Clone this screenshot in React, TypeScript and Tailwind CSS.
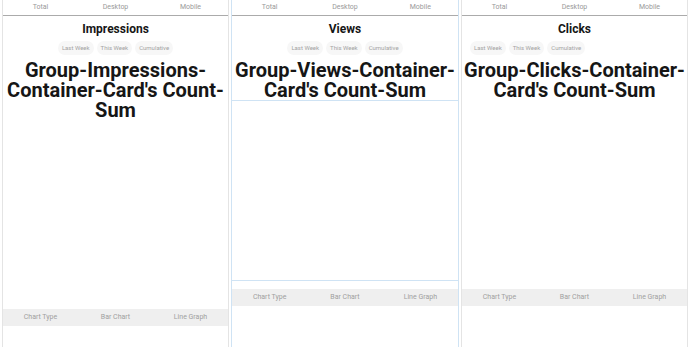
import React from "react";

type Card = {
  title: string;
  count: string;
  frame: string;
  chart: string;
  pills: string;
};

const cards: Card[] = [
  {
    title: "Impressions",
    count: "Group-Impressions-Container-Card's Count-Sum",
    frame: "w-[227px] border-x border-[#e4e4e4]",
    chart: "",
    pills: "justify-center",
  },
  {
    title: "Views",
    count: "Group-Views-Container-Card's Count-Sum",
    frame: "w-[228px] border-x border-[#cfe3f4]",
    chart: "border-y border-[#cfe3f4]",
    pills: "justify-center",
  },
  {
    title: "Clicks",
    count: "Group-Clicks-Container-Card's Count-Sum",
    frame: "w-[227px] border-x border-[#e4e4e4]",
    chart: "",
    pills: "justify-start pl-[8px]",
  },
];

const tabs = ["Total", "Desktop", "Mobile"];
const ranges = ["Last Week", "This Week", "Cumulative"];
const chartTypes = ["Chart Type", "Bar Chart", "Line Graph"];

function CountCard({ card }: { card: Card }) {
  return (
    <div className={`flex flex-col h-full bg-white ${card.frame}`}>
      <div className="grid grid-cols-3 h-[16px] border-b border-[#ababab] text-[7px] leading-[14px] text-[#9a9a9a]">
        {tabs.map((t) => (
          <div key={t} className="text-center">
            {t}
          </div>
        ))}
      </div>

      <h2 className="mt-[5px] text-center text-[12px] leading-[16px] font-bold text-[#161616]">
        {card.title}
      </h2>

      <div className={`mt-[4px] flex gap-[3px] ${card.pills}`}>
        {ranges.map((r) => (
          <span
            key={r}
            className="h-[14px] px-[4px] rounded-full bg-[#f7f7f7] text-[6px] leading-[14px] text-[#a3a3a3]"
          >
            {r}
          </span>
        ))}
      </div>

      <div className="mt-[5px] text-center text-[20px] leading-[20px] font-bold text-[#161616]">
        {card.count}
      </div>

      <div className={`h-[181px] ${card.chart}`} />

      <div className="mt-[8px] grid grid-cols-3 h-[17px] bg-[#efefef] text-[7px] leading-[17px] text-[#a0a0a0]">
        {chartTypes.map((c) => (
          <div key={c} className="text-center">
            {c}
          </div>
        ))}
      </div>
    </div>
  );
}

export default function App() {
  return (
    <div
      className="w-[690px] h-[347px] flex gap-[2px] px-[2px] bg-white overflow-hidden"
      style={{ fontFamily: "Roboto, 'Noto Sans', sans-serif" }}
    >
      {cards.map((c) => (
        <CountCard key={c.title} card={c} />
      ))}
    </div>
  );
}
